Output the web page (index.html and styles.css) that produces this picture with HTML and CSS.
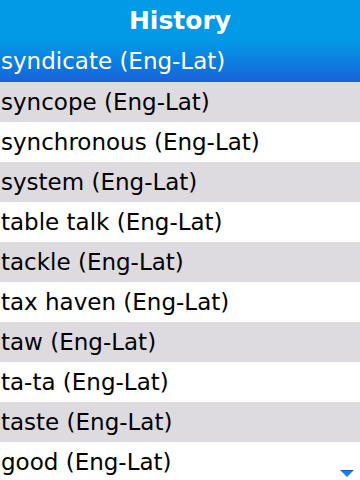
FILE: index.html
```html
<!DOCTYPE html>
<html>
<head>
    <title>History</title>
    <link rel="stylesheet" href="styles.css">
</head>
<body>
    <div class="header">History</div>
    <ul class="history">
        <li class="selected">syndicate (Eng-Lat)</li>
        <li class="alt">syncope (Eng-Lat)</li>
        <li>synchronous (Eng-Lat)</li>
        <li class="alt">system (Eng-Lat)</li>
        <li>table talk (Eng-Lat)</li>
        <li class="alt">tackle (Eng-Lat)</li>
        <li>tax haven (Eng-Lat)</li>
        <li class="alt">taw (Eng-Lat)</li>
        <li>ta-ta (Eng-Lat)</li>
        <li class="alt">taste (Eng-Lat)</li>
        <li>good (Eng-Lat)</li>
    </ul>
    <!-- スクロール矢印 -->
    <svg class="more" width="14" height="8" viewBox="0 0 14 8">
        <path d="M0 0 H14 L7 7 Z" fill="#1a7fe6"/>
        <path d="M1 0 H13" stroke="#0a3c8c" stroke-width="1"/>
    </svg>
</body>
</html>
```

FILE: styles.css
```css
body {
    margin: 0;
    width: 360px;
    height: 480px;
    overflow: hidden;
    position: relative;
    background-color: #fff;
    font-family: "DejaVu Sans", sans-serif;
}
.header {
    height: 41px;
    line-height: 41px;
    background-color: #0299e6;
    color: #fff;
    font-weight: bold;
    font-size: 25px;
    text-align: center;
}
.history {
    list-style-type: none;
    margin: 0;
    padding: 0;
}
.history li {
    height: 40px;
    line-height: 40px;
    padding-left: 1px;
    font-size: 23px;
    color: #000;
    white-space: nowrap;
}
.history li.alt {
    background-color: #dddbdf;
}
.history li.selected {
    height: 41px;
    color: #fff;
    background: linear-gradient(#0299e6, #1763d8);
}
.more {
    position: absolute;
    right: 6px;
    bottom: 2px;
}
```
